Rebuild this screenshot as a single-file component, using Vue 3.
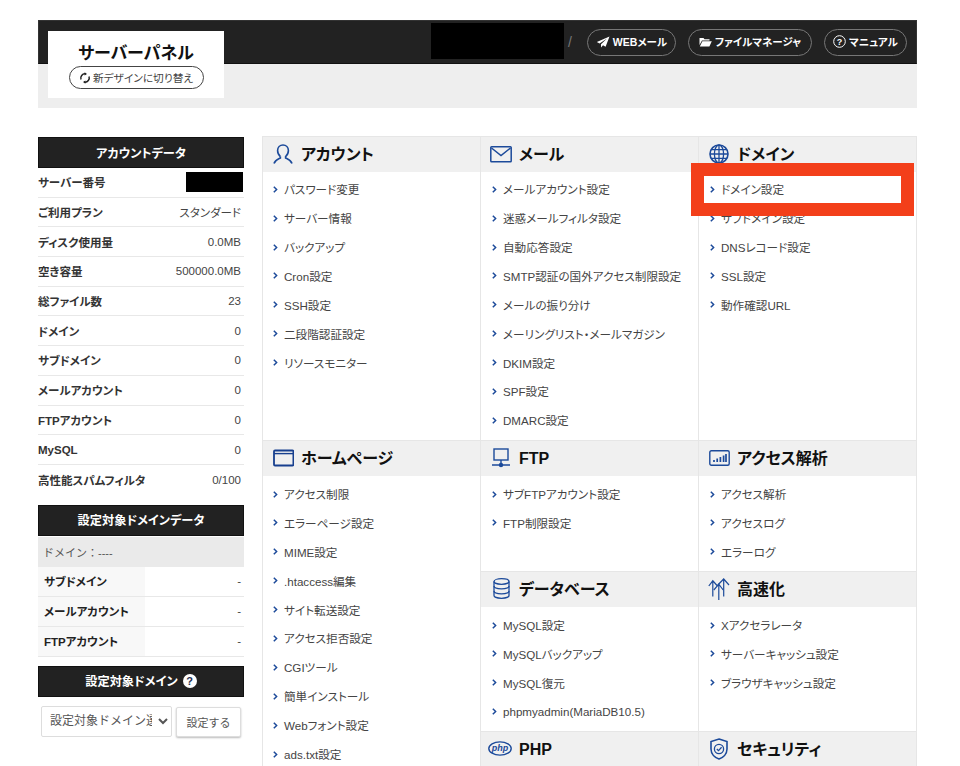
<script setup>
const accountRows = [
  ['サーバー番号', null],
  ['ご利用プラン', 'スタンダード'],
  ['ディスク使用量', '0.0MB'],
  ['空き容量', '500000.0MB'],
  ['総ファイル数', '23'],
  ['ドメイン', '0'],
  ['サブドメイン', '0'],
  ['メールアカウント', '0'],
  ['FTPアカウント', '0'],
  ['MySQL', '0'],
  ['高性能スパムフィルタ', '0/100'],
]
const domainRows = ['サブドメイン', 'メールアカウント', 'FTPアカウント']
const sections = [
  { key: 'account', title: 'アカウント', cls: 'c1 r1', links: ['パスワード変更', 'サーバー情報', 'バックアップ', 'Cron設定', 'SSH設定', '二段階認証設定', 'リソースモニター'] },
  { key: 'mail', title: 'メール', cls: 'c2 r1', links: ['メールアカウント設定', '迷惑メールフィルタ設定', '自動応答設定', 'SMTP認証の国外アクセス制限設定', 'メールの振り分け', 'メーリングリスト・メールマガジン', 'DKIM設定', 'SPF設定', 'DMARC設定'] },
  { key: 'domain', title: 'ドメイン', cls: 'c3 r1', links: ['ドメイン設定', 'サブドメイン設定', 'DNSレコード設定', 'SSL設定', '動作確認URL'] },
  { key: 'home', title: 'ホームページ', cls: 'c1 r2-4 lower', links: ['アクセス制限', 'エラーページ設定', 'MIME設定', '.htaccess編集', 'サイト転送設定', 'アクセス拒否設定', 'CGIツール', '簡単インストール', 'Webフォント設定', 'ads.txt設定'] },
  { key: 'ftp', title: 'FTP', latin: true, cls: 'c2 r2 lower', links: ['サブFTPアカウント設定', 'FTP制限設定'] },
  { key: 'analytics', title: 'アクセス解析', cls: 'c3 r2 lower', links: ['アクセス解析', 'アクセスログ', 'エラーログ'] },
  { key: 'db', title: 'データベース', cls: 'c2 r3 lower', links: ['MySQL設定', 'MySQLバックアップ', 'MySQL復元', 'phpmyadmin(MariaDB10.5)'] },
  { key: 'speed', title: '高速化', cls: 'c3 r3 lower', links: ['Xアクセラレータ', 'サーバーキャッシュ設定', 'ブラウザキャッシュ設定'] },
  { key: 'php', title: 'PHP', latin: true, cls: 'c2 r4', links: [] },
  { key: 'security', title: 'セキュリティ', cls: 'c3 r4', links: [] },
]
</script>

<template>
  <div class="page">
    <header class="top">
      <div class="bar">
        <div class="redact-top"></div>
        <span class="slash">/</span>
        <a class="pill p1">
          <svg width="14" height="12" viewBox="0 0 14 12"><path d="M13.5 0.5 L0.8 6 L3.6 7.4 L11 2.4 L5 8.2 L5 11.5 L7 9.3 L9.6 10.8 Z" fill="#fff"/></svg>
          WEBメール
        </a>
        <a class="pill p2">
          <svg width="13" height="10" viewBox="0 0 13 10"><path d="M0.5 1 H4.5 L5.5 2.2 H10.5 V3.4 H3 L0.5 8 Z M3.4 4.2 H12.8 L10.4 9.5 H0.8 Z" fill="#fff"/></svg>
          ファイルマネージャ
        </a>
        <a class="pill p3">
          <svg width="13" height="13" viewBox="0 0 13 13"><circle cx="6.5" cy="6.5" r="5.8" fill="none" stroke="#fff"/><text x="6.5" y="9.6" text-anchor="middle" font-size="9" fill="#fff" font-family="Liberation Sans">?</text></svg>
          マニュアル
        </a>
      </div>
      <div class="strip"></div>
      <div class="logo">
        <h1>サーバーパネル</h1>
        <a class="switch">
          <svg width="12" height="12" viewBox="0 0 12 12" fill="none" stroke="#222" stroke-width="1.5"><path d="M2 7.5 A4.2 4.2 0 0 1 6.5 1.9"/><path d="M10 4.5 A4.2 4.2 0 0 1 5.5 10.1"/><path d="M5.6 0.2 L8 2 L5.6 3.6 Z" fill="#222" stroke="none"/><path d="M6.4 8.4 L4 10 L6.4 11.8 Z" fill="#222" stroke="none"/></svg>
          新デザインに切り替え
        </a>
      </div>
    </header>

    <div class="body">
      <aside class="side">
        <h2 class="side-head">アカウントデータ</h2>
        <ul class="rows">
          <li v-for="r in accountRows" :key="r[0]" class="row">
            <span class="k">{{ r[0] }}</span>
            <span v-if="r[1]" class="v">{{ r[1] }}</span>
            <span v-else class="redact-side"></span>
          </li>
        </ul>

        <h2 class="side-head second">設定対象ドメインデータ</h2>
        <div class="dom-line">ドメイン：----</div>
        <ul class="rows">
          <li v-for="r in domainRows" :key="r" class="row2">
            <span class="k2">{{ r }}</span>
            <span class="v2">-</span>
          </li>
        </ul>

        <h2 class="side-head third">
          設定対象ドメイン
          <span class="q">?</span>
        </h2>
        <div class="form">
          <select class="sel"><option>設定対象ドメイン選択</option></select>
          <button class="btn">設定する</button>
        </div>
      </aside>

      <main class="grid">
        <section v-for="s in sections" :key="s.key" class="sec" :class="s.cls">
          <h3 class="head">
            <span class="ico">
              <svg v-if="s.key==='account'" width="22" height="22" viewBox="0 0 22 22" fill="none" stroke="#1c4a9a" stroke-width="1.6"><path d="M8.4 13.6 C6 11.6 5.6 9.4 5.6 7.6 C5.6 4.2 8 2 11 2 C14 2 16.4 4.2 16.4 7.6 C16.4 9.4 16 11.6 13.6 13.6 V15 C16 16.2 19 17 20 20.5"/><path d="M8.4 13.6 V15 C6 16.2 3 17 2 20.5"/></svg>
              <svg v-else-if="s.key==='mail'" width="22" height="18" viewBox="0 0 22 18" fill="none" stroke="#1c4a9a" stroke-width="1.5"><rect x="0.8" y="1.7" width="20.4" height="15" rx="0.8"/><path d="M1.5 3 L11 10.5 L20.5 3"/></svg>
              <svg v-else-if="s.key==='domain'" width="20" height="20" viewBox="0 0 20 20" fill="none" stroke="#1c4a9a" stroke-width="1.3"><circle cx="10" cy="10" r="9" stroke-width="1.6"/><ellipse cx="10" cy="10" rx="4.6" ry="9"/><path d="M10 1 V19 M1 10 H19 M2.4 5.6 H17.6 M2.4 14.4 H17.6"/></svg>
              <svg v-else-if="s.key==='home'" width="21" height="18" viewBox="0 0 21 18" fill="none" stroke="#173f8e"><rect x="1" y="1.5" width="19.4" height="15" rx="1" stroke-width="1.8"/><path d="M1 4.6 H20" stroke-width="1.4"/></svg>
              <svg v-else-if="s.key==='ftp'" width="20" height="20" viewBox="0 0 20 20" fill="none" stroke="#1c4a9a" stroke-width="1.4"><rect x="3" y="1" width="14" height="11"/><path d="M10 12 V16 M1 17 H19"/><circle cx="10" cy="17" r="1.5" fill="#1c4a9a"/></svg>
              <svg v-else-if="s.key==='analytics'" width="21" height="16" viewBox="0 0 21 16" fill="none" stroke="#1c4a9a"><rect x="0.8" y="0.8" width="19.4" height="14.4" rx="1.5" stroke-width="1.4"/><path d="M5 12 V10 M8.2 12 V8.5 M11.4 12 V7 M14.6 12 V5.5 M17 12 V4" stroke-width="1.7"/></svg>
              <svg v-else-if="s.key==='db'" width="17" height="21" viewBox="0 0 17 21" fill="none" stroke="#1c4a9a" stroke-width="1.3"><ellipse cx="8.5" cy="3.5" rx="7.5" ry="2.8"/><path d="M1 3.5 V17.5 C1 19 4.3 20.3 8.5 20.3 C12.7 20.3 16 19 16 17.5 V3.5"/><path d="M1 8 C1 9.6 4.3 10.8 8.5 10.8 C12.7 10.8 16 9.6 16 8"/><path d="M1 13 C1 14.6 4.3 15.8 8.5 15.8 C12.7 15.8 16 14.6 16 13"/></svg>
              <svg v-else-if="s.key==='speed'" width="22" height="22" viewBox="0 0 22 22" fill="none" stroke="#1c4a9a" stroke-width="1.2"><path d="M0.8 8 L4.8 2.8 L9.5 8 M4.8 3 V18.5"/><path d="M9.8 7 L15.7 1 L21 7 M15.7 1.2 V18.5"/><path d="M5.8 12 L10.8 6.2 L15.2 12 M10.8 6.4 V22"/></svg>
              <svg v-else-if="s.key==='php'" class="php" width="24" height="15" viewBox="0 0 24 15"><ellipse cx="12" cy="7.5" rx="11.2" ry="6.6" fill="none" stroke="#1c4a9a" stroke-width="1.4"/><text x="12" y="10.4" text-anchor="middle" font-size="9" font-style="italic" font-weight="700" fill="#1c4a9a" font-family="Liberation Sans">php</text></svg>
              <svg v-else width="18" height="22" viewBox="0 0 18 22" fill="none" stroke="#1c4a9a"><path d="M9 1 L17 3.6 V11 C17 16 13 19.6 9 21 C5 19.6 1 16 1 11 V3.6 Z" stroke-width="1.6"/><circle cx="9" cy="11" r="4.6" stroke-width="1.3"/><path d="M6.8 11 L8.5 12.6 L11.6 9.2" stroke-width="1.3"/></svg>
            </span>
            <span :class="s.latin ? 'title-latin' : 'title-cjk'">{{ s.title }}</span>
          </h3>
          <ul v-if="s.links.length" class="links">
            <li v-for="l in s.links" :key="l">
              <svg class="chev" width="5" height="7" viewBox="0 0 5 7"><path d="M0.8 0.8 L3.6 3.5 L0.8 6.2" fill="none" stroke="#1c4a9a" stroke-width="1.5"/></svg>
              <a>{{ l }}</a>
            </li>
          </ul>
        </section>
        <div class="mark"></div>
      </main>
    </div>
  </div>
</template>

<style>
html, body { margin: 0; background: #fff; }
</style>

<style scoped>
.page {
  height: 766px;
  overflow: hidden;
  padding: 20px 43px 0 38px;
  box-sizing: border-box;
  font-family: "Liberation Sans", "Noto Sans CJK JP", sans-serif;
  font-feature-settings: "palt";
  color: #222;
}
h1, h2, h3, ul { margin: 0; padding: 0; list-style: none; }

.top { position: relative; }
.bar {
  height: 44px;
  box-sizing: border-box;
  background: #222;
  border: 1px solid #333;
  border-bottom-color: #111;
  display: flex;
  align-items: center;
  justify-content: flex-end;
  padding: 0 9px 0 0;
  gap: 12px;
}
.redact-top { width: 133px; height: 36px; background: #000; align-self: flex-start; margin-top: 2px; }
.slash { color: #777; font-size: 14px; margin: 0 3px 0 -8px; }
.pill {
  height: 27px;
  box-sizing: border-box;
  border: 1px solid #777;
  border-radius: 14px;
  color: #fff;
  display: flex;
  align-items: center;
  justify-content: center;
  gap: 3px;
  padding-bottom: 1px;
  font-size: 10.5px;
  font-weight: 700;
}
.p1 { width: 89px; }
.p2 { width: 124px; }
.p3 { width: 83px; }
.pill svg { flex: none; }
.strip { height: 44px; background: #eee; }
.logo {
  position: absolute;
  left: 10px;
  top: 11px;
  width: 176px;
  height: 67px;
  background: #fff;
  display: flex;
  flex-direction: column;
  align-items: center;
}
.logo h1 { font-size: 17px; line-height: 22px; margin-top: 12px; font-weight: 700; color: #111; }
.switch {
  margin-top: 1px;
  height: 23px;
  width: 135px;
  box-sizing: border-box;
  border: 1px solid #444;
  border-radius: 12px;
  display: flex;
  align-items: center;
  justify-content: center;
  gap: 2px;
  font-size: 10.7px;
  color: #444;
}

.body { display: flex; margin-top: 28px; gap: 18px; align-items: flex-start; }
.side { width: 206px; flex: none; margin-top: 1px; }
.side-head {
  height: 31px;
  background: #222;
  border: 1px solid #111;
  box-sizing: border-box;
  color: #fff;
  font-size: 12.2px;
  font-weight: 700;
  display: flex;
  align-items: center;
  justify-content: center;
  gap: 5px;
}
.second { margin-top: 10px; }
.third { margin-top: 9px; }
.row {
  height: 29.7px;
  box-sizing: border-box;
  border-bottom: 1px solid #e8e8e8;
  display: flex;
  align-items: center;
  justify-content: space-between;
  padding-right: 3px;
  font-size: 11.5px;
}
.row:last-child { border-bottom: 0; }
.k { font-weight: 600; color: #333; }
.v { color: #444; font-size: 11.5px; }
.redact-side { width: 57px; height: 20px; background: #000; margin-right: -2px; }
.dom-line {
  height: 30px;
  margin-top: 1px;
  background: #eaeaea;
  display: flex;
  align-items: center;
  padding-left: 5px;
  font-size: 11px;
  color: #555;
  font-feature-settings: normal;
}
.row2 {
  height: 30px;
  box-sizing: border-box;
  border-bottom: 1px solid #e8e8e8;
  display: flex;
  align-items: stretch;
  font-size: 11.5px;
}
.k2 { width: 107px; box-sizing: border-box; background: #f8f8f8; padding-left: 6px; font-weight: 600; display: flex; align-items: center; color: #222; }
.v2 { flex: 1; padding-right: 3px; color: #444; display: flex; align-items: center; justify-content: flex-end; }
.q {
  width: 14px;
  height: 14px;
  border-radius: 50%;
  background: #fff;
  color: #1d2d50;
  font-size: 11px;
  display: flex;
  align-items: center;
  justify-content: center;
}
.form { display: flex; gap: 4px; padding: 9px 3px 0 3px; align-items: flex-start; }
.sel {
  width: 131px;
  height: 31px;
  box-sizing: border-box;
  border: 1px solid #ddd;
  background: #fff;
  color: #555;
  font: 12px "Liberation Sans", "Noto Sans CJK JP", sans-serif;
  padding: 0 3px 0 4px;
  border-radius: 2px;
}
.btn {
  width: 65px;
  height: 30px;
  margin-top: 1px;
  box-sizing: border-box;
  border: 1px solid #ddd;
  border-radius: 2px;
  background: #fff;
  box-shadow: 0 1px 2px #bbb;
  color: #555;
  font: 11px "Liberation Sans", "Noto Sans CJK JP", sans-serif;
}

.grid {
  position: relative;
  width: 655px;
  display: grid;
  grid-template-columns: 217px 218px 218px;
  grid-template-rows: 304px 131px 160px 200px;
  border: 1px solid #e6e6e6;
  border-width: 1px 1px 0 1px;
  box-sizing: border-box;
}
.c1 { grid-column: 1; border-left: 0; }
.c2 { grid-column: 2; }
.c3 { grid-column: 3; }
.r1 { grid-row: 1; }
.r2 { grid-row: 2; }
.r3 { grid-row: 3; }
.r4 { grid-row: 4; }
.r2-4 { grid-row: 2 / 5; }
.sec { border-left: 1px solid #e6e6e6; border-bottom: 1px solid #e6e6e6; box-sizing: border-box; }
.c1 { border-left: 0; }
.head {
  height: 35px;
  box-sizing: border-box;
  background: #f0f0f0;
  display: flex;
  align-items: center;
  padding: 0 0 2px 9px;
  font-size: 16px;
  font-weight: 700;
  color: #111;
  gap: 7px;
}
.title-cjk { margin-bottom: 2px; }
.title-latin { margin-top: 3px; }
.ico { width: 22px; display: flex; justify-content: center; align-items: center; flex: none; }
.php { margin-left: -2px; flex: none; }
.links { padding-top: 2.8px; }
.lower .links { padding-top: 3.6px; }
.links li {
  height: 28.9px;
  display: flex;
  align-items: center;
  gap: 6px;
  padding-left: 11px;
  font-size: 11.6px;
  color: #444;
}
.c1 .links li { padding-left: 10px; }
.chev { flex: none; }
.mark {
  position: absolute;
  left: 428px;
  top: 26px;
  width: 223px;
  height: 53px;
  box-sizing: border-box;
  border: 13px solid #f33f1a;
  pointer-events: none;
}
</style>
